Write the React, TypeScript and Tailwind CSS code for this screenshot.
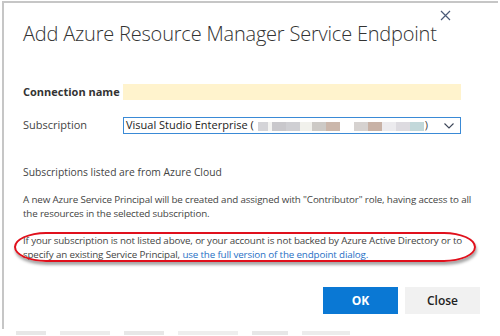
import React from "react";

const blur = [
  ["#d4d4d8", 10], ["#f4f4f2", 4], ["#c9c8cc", 14], ["#cfcfd3", 14], ["#f1f1ec", 12], ["#cdcac6", 14], ["#cbb7ab", 14],
  ["#ffffff", 14], ["#d6d2d0", 14], ["#c8b2a6", 14], ["#ecebee", 14], ["#dddbe0", 14], ["#c2d8da", 14],
] as const;

export default function App() {
  const font = { fontFamily: '"Open Sans", "Noto Sans", sans-serif' };
  return (
    <div className="w-[500px] h-[336px] bg-white overflow-hidden relative" style={font}>
      <div className="ml-[2px] mt-[1px] w-[496px] h-[328px] border-t-2 border-l-2 border-[#c6c6c6] bg-white relative">
        <button className="absolute right-[47px] top-[7px] text-[#4a5a78]">
          <svg width="11" height="11" viewBox="0 0 11 11" stroke="currentColor" strokeWidth="1.2">
            <path d="M1 1 L10 10 M10 1 L1 10" />
          </svg>
        </button>

        <div className="pl-[19px] pt-[17px]">
          <h1 className="text-[20px] leading-[28px] font-light text-[#333] tracking-[-0.2px]">
            Add Azure Resource Manager Service Endpoint
          </h1>

          <div className="mt-[36px] flex items-center h-[16px]">
            <label className="w-[100px] text-[11px] font-bold text-[#333]">Connection name</label>
            <div className="w-[338px] h-[16px] bg-[#fff3cd]" />
          </div>

          <div className="mt-[17px] flex items-center h-[17px]">
            <label className="w-[100px] text-[11px] text-[#444]">Subscription</label>
            <div className="w-[338px] h-[17px] border border-[#3a8ad6] flex items-center pl-[2px] pr-[6px]">
              <span className="text-[11px] text-[#222] whitespace-nowrap">Visual Studio Enterprise (</span>
              <div className="flex h-[9px] ml-[4px] mt-[1px]">
                {blur.map(([c, w], i) => (
                  <div key={i} style={{ background: c, width: w }} />
                ))}
              </div>
              <span className="text-[11px] text-[#444] ml-[1px]">)</span>
              <svg className="ml-auto" width="10" height="6" viewBox="0 0 10 6" fill="none" stroke="#3c4658" strokeWidth="1.1">
                <path d="M0.5 0.5 L5 5 L9.5 0.5" />
              </svg>
            </div>
          </div>

          <p className="mt-[31px] text-[10.3px] leading-[14px] text-[#444] whitespace-nowrap">
            Subscriptions listed are from Azure Cloud
          </p>

          <p className="mt-[14px] text-[9.8px] leading-[14px] text-[#444] whitespace-nowrap tracking-[-0.15px]">
            A new Azure Service Principal will be created and assigned with "Contributor" role, having access to all
            <br />
            the resources in the selected subscription.
          </p>

          <div className="relative mt-[13px] w-[450px]">
            <p className="text-[9.8px] leading-[14px] text-[#444] whitespace-nowrap tracking-[-0.15px]">
              If your subscription is not listed above, or your account is not backed by Azure Active Directory or to
              <br />
              specify an existing Service Principal,{" "}
              <span className="text-[#1f6fc5]">use the full version of the endpoint dialog.</span>
            </p>
            <div className="absolute left-[-9px] top-[-2px] w-[462px] h-[30px] rounded-[32px/15px] border-2 border-[#e0101c] shadow-[1px_3px_3px_rgba(0,0,0,0.35)]" />
          </div>

          <div className="mt-[25px] flex justify-end gap-[7px] pr-[18px]">
            <button className="w-[75px] h-[27px] bg-[#0a78d4] text-white text-[12px] font-bold">OK</button>
            <button className="w-[75px] h-[27px] bg-[#f1f1f1] text-[#222] text-[12px] font-semibold">Close</button>
          </div>
        </div>
      </div>
      <div className="flex gap-[14px] pl-[16px] mt-[2px] opacity-60">
        <div className="w-[30px] h-[4px] bg-[#d8d8d8]" />
        <div className="w-[50px] h-[4px] bg-[#e0e0e0]" />
        <div className="w-[40px] h-[4px] bg-[#d8d8d8]" />
        <div className="w-[60px] h-[4px] bg-[#e4e4e4]" />
        <div className="w-[36px] h-[4px] bg-[#d8d8d8]" />
        <div className="w-[48px] h-[4px] bg-[#e0e0e0]" />
      </div>
    </div>
  );
}
